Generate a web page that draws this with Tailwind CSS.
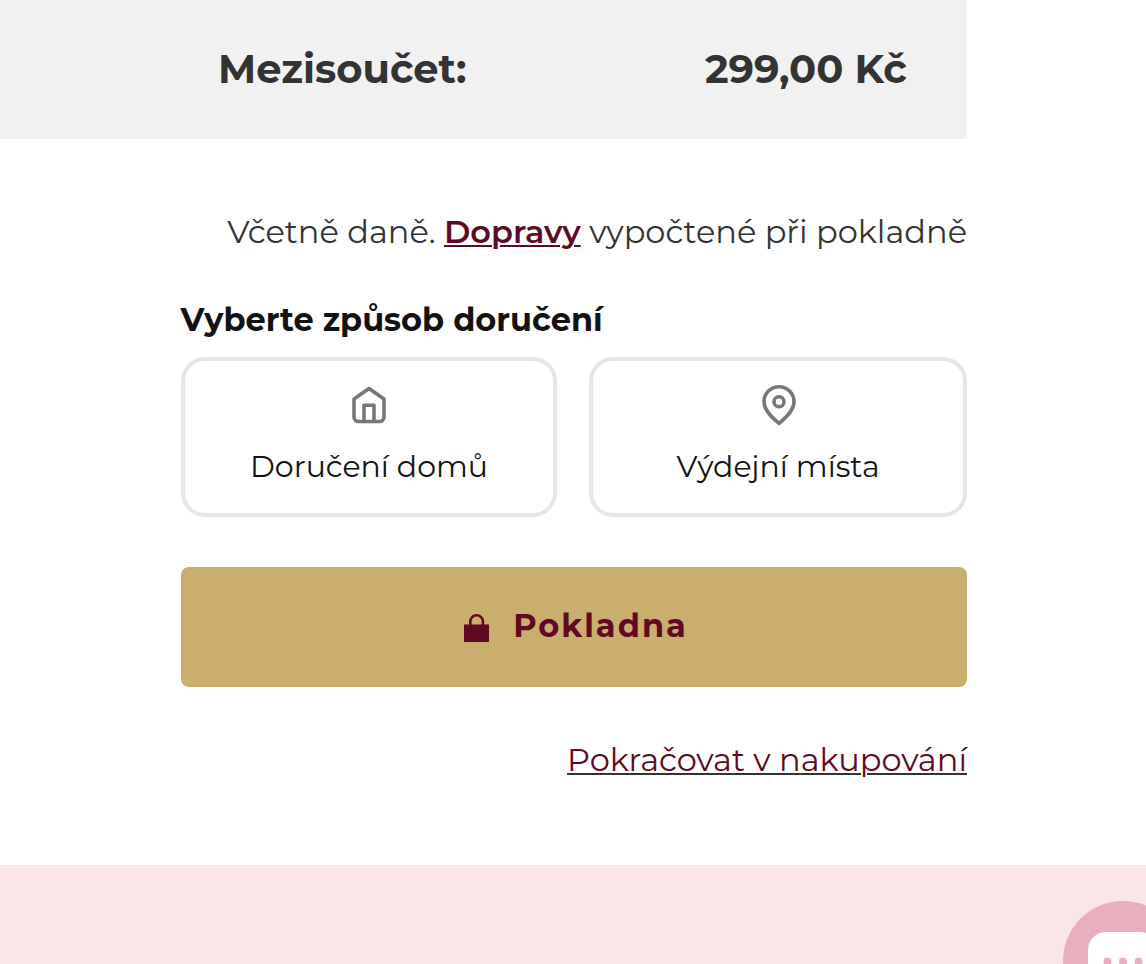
<!DOCTYPE html>
<html lang="cs">
<head>
<meta charset="utf-8">
<title>Košík</title>
<script src="https://cdn.jsdelivr.net/npm/@tailwindcss/browser@4"></script>
</head>
<body class="h-[964px] overflow-hidden bg-white font-['Montserrat','Inter',sans-serif] text-[32px] leading-[48px] text-[#333333]">
<div class="flex h-[964px] flex-col overflow-hidden">
  <section class="flex h-[139px] w-[967px] shrink-0 justify-between bg-[#f1f1f1] pt-[45px] pr-[60px] pl-[218px] text-[40px] font-bold">
    <span>Mezisoučet:</span>
    <span>299,00 Kč</span>
  </section>

  <main class="flex h-[726px] w-[967px] shrink-0 flex-col pt-[69px] pl-[181px]">
    <p class="text-right whitespace-nowrap -ml-4">Včetně daně. <a class="font-semibold text-[#5f0922] underline decoration-2 underline-offset-[2px]">Dopravy</a> vypočtené při pokladně</p>
    <h2 class="mt-10 -ml-[0.5px] font-bold text-[#121212]">Vyberte způsob doručení</h2>

    <div class="mt-[13px] flex h-40 gap-8 text-[30px] text-[#121212]">
      <button class="flex w-[376px] flex-col items-center rounded-[24px] border-4 border-[#e5e6ea] pt-5">
        <svg class="h-12 w-12" viewBox="0 0 48 48" fill="none" stroke="#75777c" stroke-width="3.6" stroke-linejoin="round" stroke-linecap="round"><path d="M9 18 24 7.500 39 18V36a4.500 4.500 0 0 1-4.500 4.500h-21A4.500 4.500 0 0 1 9 36z"/><path d="M19 40V24.200h10V40" stroke-linecap="butt"/></svg>
        <span class="mt-[14px]">Doručení domů</span>
      </button>
      <button class="flex w-[378px] flex-col items-center rounded-[24px] border-4 border-[#e5e6ea] pt-5">
        <svg class="ml-[2px] h-12 w-12" viewBox="0 0 48 48" fill="none" stroke="#75777c" stroke-width="3.6"><path d="M24 42.300C17 36.500 9 29.300 9 20.700a15 15 0 0 1 30 0C39 29.300 31 36.500 24 42.300z" stroke-linejoin="round"/><circle cx="24" cy="20.700" r="5"/></svg>
        <span class="mt-[14px]">Výdejní místa</span>
      </button>
    </div>

    <button class="mt-[50px] flex h-[120px] items-center justify-center rounded-lg bg-[#c9ae6d] pl-[4px] font-bold tracking-[2px] text-[#5f0922]">
      <svg class="mt-[2px] mr-[24px] h-7 w-[25px]" viewBox="0 0 25 28"><path d="M0 10.500h25V28H0z" fill="#5f0922"/><path d="M6.300 12V7.600a6.300 6.300 0 0 1 12.600 0V12" fill="none" stroke="#5f0922" stroke-width="2.600"/></svg>
      <span class="-mt-[2px]">Pokladna</span>
    </button>

    <p class="mt-[49px] text-right text-[#5f0922]"><a class="underline decoration-[#333333] decoration-2 underline-offset-[2px]">Pokračovat v nakupování</a></p>
  </main>

  <footer class="relative h-[99px] shrink-0 overflow-hidden bg-[#fae5e8]">
    <!-- Floating chat launcher -->
    <div class="absolute top-9 left-[1063px] h-[120px] w-[120px] rounded-full bg-[#eaafbf]">
      <svg class="h-full w-full" viewBox="0 0 120 120"><rect x="25" y="31" width="70" height="60" rx="18" fill="#fff"/><g fill="#eaafbf"><circle cx="44.500" cy="60.500" r="4"/><circle cx="60" cy="60.500" r="4"/><circle cx="75.500" cy="60.500" r="4"/></g></svg>
    </div>
  </footer>
</div>
</body>
</html>
